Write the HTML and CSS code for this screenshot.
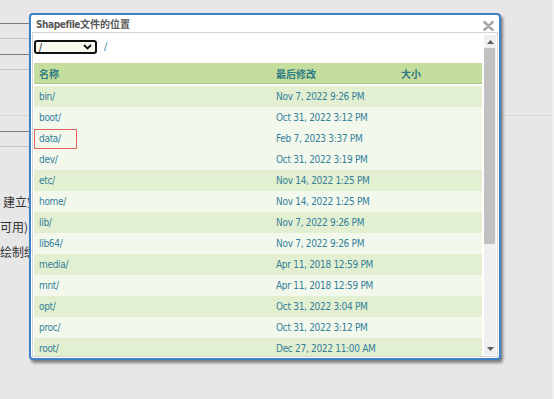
FILE: index.html
```html
<!DOCTYPE html>
<html lang="zh-CN">

<head>
    <meta charset="UTF-8">
    <meta name="viewport" content="width=device-width, initial-scale=1.0">
    <title>Shapefile文件的位置</title>
    <link rel="stylesheet" href="styles.css">
</head>

<body>
    <!-- 背景中的表单（被遮罩） -->
    <div class="page">
        <div class="form-lines">
            <div class="rule dark"></div>
            <div class="rule light"></div>
            <div class="rule dark"></div>
            <div class="rule light"></div>
        </div>
        <div class="section-line"></div>
        <div class="form-lines second">
            <div class="rule dark"></div>
            <div class="rule light"></div>
        </div>
        <div class="form-text">
            <p class="shift-a">建立空</p>
            <p>可用)</p>
            <p>绘制缓</p>
        </div>
    </div>

    <!-- 文件选择对话框 -->
    <div class="dialog">
        <div class="dialog-title">Shapefile<span class="cjk">文件的位置</span></div>
        <svg class="close" width="11" height="10" viewBox="0 0 11 10">
            <path d="M1.5 1.2 L9.5 8.8 M9.5 1.2 L1.5 8.8" stroke="#a6a6a6" stroke-width="2.6" stroke-linecap="round" fill="none"/>
        </svg>

        <div class="dialog-body">
            <div class="browser">
                <div class="toolbar">
                    <div class="path-select">
                        <span>/</span>
                        <svg width="9" height="6" viewBox="0 0 9 6">
                            <path d="M1 1 L4.5 4.5 L8 1" stroke="#111" stroke-width="1.8" fill="none"/>
                        </svg>
                    </div>
                    <span class="path">/</span>
                </div>

                <div class="list-head">
                    <span>名称</span>
                    <span>最后修改</span>
                    <span>大小</span>
                </div>

                <div class="list-rows">
                    <div class="row alt"><span>bin/</span><span>Nov 7, 2022 9:26 PM</span><span></span></div>
                    <div class="row"><span>boot/</span><span>Oct 31, 2022 3:12 PM</span><span></span></div>
                    <div class="row"><span class="marked">data/</span><span>Feb 7, 2023 3:37 PM</span><span></span></div>
                    <div class="row"><span>dev/</span><span>Oct 31, 2022 3:19 PM</span><span></span></div>
                    <div class="row alt"><span>etc/</span><span>Nov 14, 2022 1:25 PM</span><span></span></div>
                    <div class="row"><span>home/</span><span>Nov 14, 2022 1:25 PM</span><span></span></div>
                    <div class="row alt"><span>lib/</span><span>Nov 7, 2022 9:26 PM</span><span></span></div>
                    <div class="row"><span>lib64/</span><span>Nov 7, 2022 9:26 PM</span><span></span></div>
                    <div class="row alt"><span>media/</span><span>Apr 11, 2018 12:59 PM</span><span></span></div>
                    <div class="row"><span>mnt/</span><span>Apr 11, 2018 12:59 PM</span><span></span></div>
                    <div class="row alt"><span>opt/</span><span>Oct 31, 2022 3:04 PM</span><span></span></div>
                    <div class="row"><span>proc/</span><span>Oct 31, 2022 3:12 PM</span><span></span></div>
                    <div class="row alt"><span>root/</span><span>Dec 27, 2022 11:00 AM</span><span></span></div>
                </div>
            </div>

            <div class="scrollbar">
                <div class="arrow">
                    <svg width="7" height="4" viewBox="0 0 7 4"><path d="M3.5 0 L7 4 L0 4 Z" fill="#606060"/></svg>
                </div>
                <div class="thumb"></div>
                <div class="arrow bottom">
                    <svg width="7" height="4" viewBox="0 0 7 4"><path d="M0 0 L7 0 L3.5 4 Z" fill="#606060"/></svg>
                </div>
            </div>
        </div>
    </div>
</body>

</html>
```

FILE: styles.css
```css
* {
    margin: 0;
    padding: 0;
    box-sizing: border-box;
}

body {
    width: 554px;
    height: 399px;
    overflow: hidden;
    position: relative;
    background-color: #e7e7e7;
    font-family: "DejaVu Sans Condensed", "DejaVu Sans", "Noto Sans CJK SC", sans-serif;
}

/* 背景页面 */
.page {
    height: 399px;
    border-right: 2px solid #f0f0f0;
}

.form-lines {
    width: 31px;
    padding-top: 8px;
}

.rule {
    height: 16px;
    border-bottom: 1px solid #7c7c7c;
}

.rule.light {
    height: 15px;
    border-bottom-color: #c4c4c4;
}

.section-line {
    margin-top: 45px;
    height: 1px;
    background: #d3dbc6;
}

.form-lines.second {
    padding-top: 0;
}

.form-text {
    margin-top: 42px;
    font-family: "Noto Sans CJK SC", sans-serif;
    font-size: 12px;
    line-height: 25px;
    color: #333;
    white-space: nowrap;
}

.shift-a {
    padding-left: 3px;
}

/* 对话框 */
.dialog {
    position: absolute;
    left: 29px;
    top: 13px;
    width: 472px;
    height: 347px;
    background: #fff;
    border: 2px solid #3f7fc6;
    border-radius: 4px;
    box-shadow: 2px 3px 3px rgba(0, 0, 0, 0.45);
    display: flex;
    flex-direction: column;
}

.dialog-title {
    height: 17px;
    padding-left: 5px;
    line-height: 17px;
    font-size: 10px;
    font-weight: bold;
    letter-spacing: -0.4px;
    color: #585858;
}

.cjk {
    font-family: "Noto Sans CJK SC", sans-serif;
    font-size: 10px;
    letter-spacing: 0;
}

.close {
    position: absolute;
    right: 5px;
    top: 6px;
}

.dialog-body {
    flex: 1;
    margin: 0 1px 1px;
    border: 1px solid #d4d4d4;
    display: flex;
    overflow: hidden;
}

.browser {
    flex: 1;
    padding: 0 2px 0 1px;
    overflow: hidden;
}

.toolbar {
    height: 30px;
    padding-top: 7px;
    display: flex;
    align-items: flex-start;
}

.path-select {
    width: 63px;
    height: 14px;
    border: 2px solid #111;
    border-radius: 3px;
    background: #f8f8ec;
    display: flex;
    align-items: center;
    justify-content: space-between;
    padding: 0 3px 0 3px;
    font-size: 10px;
    color: #111;
}

.path {
    margin-left: 7px;
    font-size: 11px;
    line-height: 14px;
    color: #3b86a0;
}

.list-head,
.row {
    display: grid;
    grid-template-columns: 237px 125px 1fr;
    padding-left: 5px;
    height: 21px;
    line-height: 22px;
    font-size: 10px;
    letter-spacing: -0.3px;
    color: #34809a;
    white-space: nowrap;
}

.list-head {
    background: #c6de9d;
    border-bottom: 1px solid #b2cb8b;
    margin-bottom: 2px;
    font-family: "Noto Sans CJK SC", sans-serif;
    font-weight: bold;
    letter-spacing: 0;
    color: #2c7a84;
}

.row {
    background: #f3f8ec;
}

.row.alt {
    background: #e2efd1;
}

.marked {
    display: inline-block;
    width: 43px;
    height: 20px;
    margin: 1px 0 0 -5px;
    padding-left: 4px;
    line-height: 18px;
    border: 1px solid #e2625c;
}

/* 滚动条 */
.scrollbar {
    width: 12px;
    margin: 2px 1px 1px 0;
    background: #f0f0f0;
    display: flex;
    flex-direction: column;
}

.arrow {
    height: 13px;
    display: flex;
    align-items: center;
    justify-content: center;
}

.thumb {
    height: 196px;
    margin-right: 1px;
    background: #c1c1c1;
}

.arrow.bottom {
    margin-top: auto;
}
```
